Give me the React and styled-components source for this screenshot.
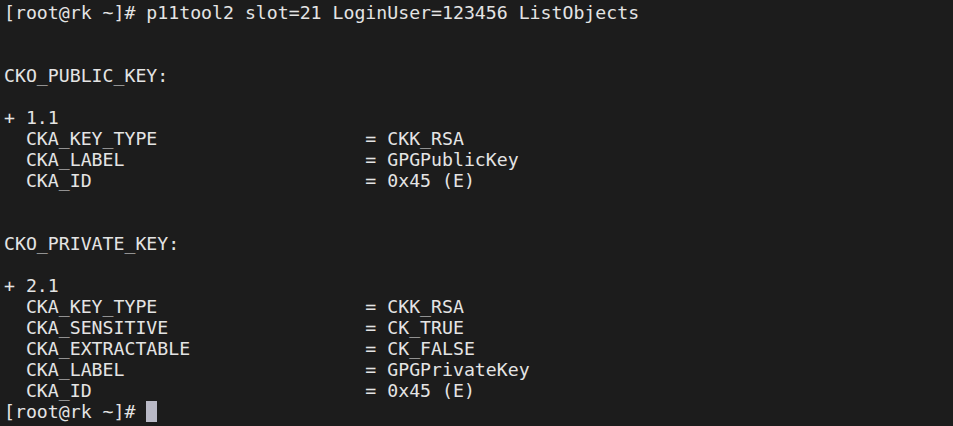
import React from 'react'
import styled, { createGlobalStyle } from 'styled-components'

const GlobalStyle = createGlobalStyle`
    html, body {
        margin: 0;
        padding: 0;
        background: #1c1c1c;
    }
`

const Terminal = styled.div`
    width: 953px;
    height: 426px;
    overflow: hidden;
    box-sizing: border-box;
    padding: 2px 0 0 4px;
    background: #1c1c1c;
    color: #e4e4e4;
    font-family: "DejaVu Sans Mono", "Liberation Mono", monospace;
    font-size: 18.2px;
    line-height: 21px;
    display: flex;
    flex-direction: column;
`

const Line = styled.div`
    height: 21px;
    white-space: pre;
    display: flex;
    align-items: center;
`

const Cursor = styled.span`
    display: inline-block;
    width: 11px;
    height: 21px;
    background: #b9b9c6;
`

const pad = (name, value) => '  ' + name.padEnd(31, ' ') + '= ' + value

const output = [
    '[root@rk ~]# p11tool2 slot=21 LoginUser=123456 ListObjects',
    '',
    '',
    'CKO_PUBLIC_KEY:',
    '',
    '+ 1.1',
    pad('CKA_KEY_TYPE', 'CKK_RSA'),
    pad('CKA_LABEL', 'GPGPublicKey'),
    pad('CKA_ID', '0x45 (E)'),
    '',
    '',
    'CKO_PRIVATE_KEY:',
    '',
    '+ 2.1',
    pad('CKA_KEY_TYPE', 'CKK_RSA'),
    pad('CKA_SENSITIVE', 'CK_TRUE'),
    pad('CKA_EXTRACTABLE', 'CK_FALSE'),
    pad('CKA_LABEL', 'GPGPrivateKey'),
    pad('CKA_ID', '0x45 (E)'),
]

const App = () => {
    return (
        <>
          <GlobalStyle />
          <Terminal>
            {output.map((text, i) => (
              <Line key={i}>{text}</Line>
            ))}
            <Line>[root@rk ~]# <Cursor /></Line>
          </Terminal>
        </>
    )
}

export default App
